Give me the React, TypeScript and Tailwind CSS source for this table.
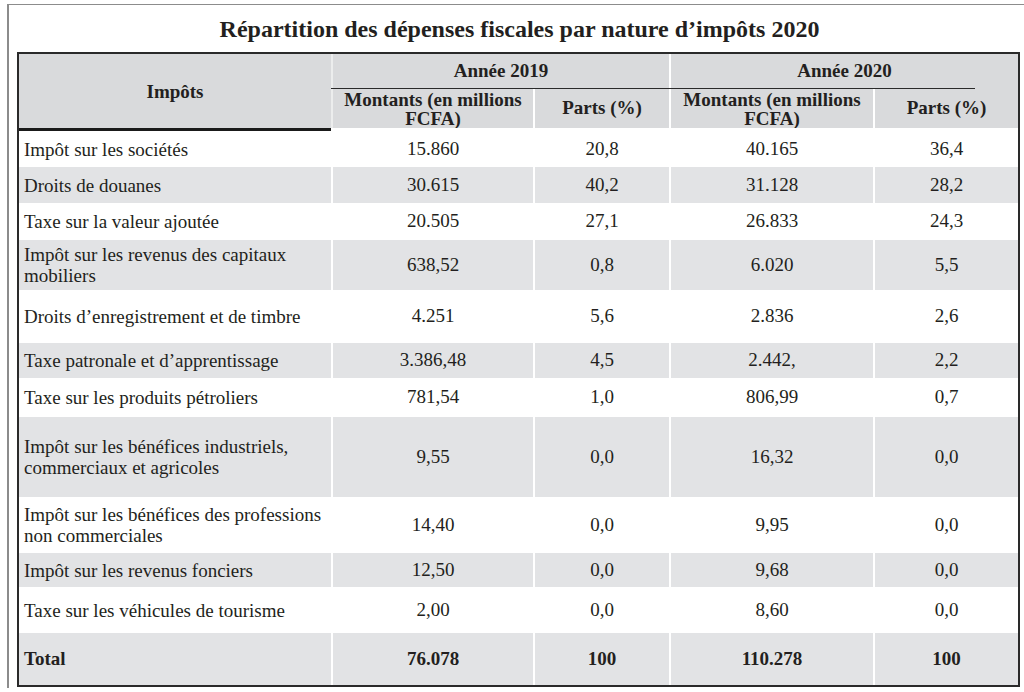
type Row = { label: string; m19: string; p19: string; m20: string; p20: string; h: string };

const rows: Row[] = [
  { label: "Impôt sur les sociétés", m19: "15.860", p19: "20,8", m20: "40.165", p20: "36,4", h: "h-[36px]" },
  { label: "Droits de douanes", m19: "30.615", p19: "40,2", m20: "31.128", p20: "28,2", h: "h-[36px]" },
  { label: "Taxe sur la valeur ajoutée", m19: "20.505", p19: "27,1", m20: "26.833", p20: "24,3", h: "h-[37px]" },
  { label: "Impôt sur les revenus des capitaux mobiliers", m19: "638,52", p19: "0,8", m20: "6.020", p20: "5,5", h: "h-[50px]" },
  { label: "Droits d’enregistrement et de timbre", m19: "4.251", p19: "5,6", m20: "2.836", p20: "2,6", h: "h-[53px]" },
  { label: "Taxe patronale et d’apprentissage", m19: "3.386,48", p19: "4,5", m20: "2.442,", p20: "2,2", h: "h-[35px]" },
  { label: "Taxe sur les produits pétroliers", m19: "781,54", p19: "1,0", m20: "806,99", p20: "0,7", h: "h-[39px]" },
  { label: "Impôt sur les bénéfices industriels, commerciaux et agricoles", m19: "9,55", p19: "0,0", m20: "16,32", p20: "0,0", h: "h-[80px]" },
  { label: "Impôt sur les bénéfices des professions non commerciales", m19: "14,40", p19: "0,0", m20: "9,95", p20: "0,0", h: "h-[56px]" },
  { label: "Impôt sur les revenus fonciers", m19: "12,50", p19: "0,0", m20: "9,68", p20: "0,0", h: "h-[34px]" },
  { label: "Taxe sur les véhicules de tourisme", m19: "2,00", p19: "0,0", m20: "8,60", p20: "0,0", h: "h-[46px]" },
];

const cols = "grid grid-cols-[312px_202px_136px_204px_145px]";

function BodyRow({ row, gray }: { row: Row; gray: boolean }) {
  const bg = gray ? "bg-[#e2e3e5]" : "bg-white";
  const cell = `flex items-center justify-center border-l-2 border-white ${bg}`;
  return (
    <div className={`${cols} ${row.h}`}>
      <div className={`flex items-center pl-[5px] pr-[4px] leading-[21px] ${bg}`}>{row.label}</div>
      <div className={cell}>{row.m19}</div>
      <div className={cell}>{row.p19}</div>
      <div className={cell}>{row.m20}</div>
      <div className={cell}>{row.p20}</div>
    </div>
  );
}

export default function App() {
  return (
    <div className="h-[692px] bg-white pt-[4px] pl-[7px] font-['Liberation_Serif',serif] text-[#231f20]">
      <div className="h-[684px] border-t border-l-2 border-[#8c8c8c] pl-[8px] pr-[4px]">
        <h1 className="flex h-[47px] items-center justify-center pl-[2px] text-[24px] font-bold">
          Répartition des dépenses fiscales par nature d’impôts 2020
        </h1>

        <div className="w-[1003px] border-2 border-[#2a2a2a] text-[19px]">
          {/* header */}
          <div className={`${cols} grid-rows-[34px_1px_39px_3px] font-bold`}>
            <div className="row-span-3 flex items-center justify-center bg-[#d9dadc] pt-[2px]">Impôts</div>
            <div className="col-span-2 flex items-center justify-center border-l-2 border-[#eceded] bg-[#d9dadc]">
              Année 2019
            </div>
            <div className="col-span-2 flex items-center justify-center border-l-2 border-white bg-[#d9dadc]">
              Année 2020
            </div>
            <div className="col-span-4 flex bg-[#d9dadc]">
              <div className="w-[644px] bg-[#2a2a2a]" />
            </div>
            <div className="flex flex-col items-center justify-center border-l-2 border-[#eceded] bg-[#d9dadc] text-center leading-[19px]">
              <span>Montants (en millions</span>
              <span>FCFA)</span>
            </div>
            <div className="flex items-center justify-center border-l-2 border-white bg-[#d9dadc]">Parts (%)</div>
            <div className="flex flex-col items-center justify-center border-l-2 border-white bg-[#d9dadc] text-center leading-[19px]">
              <span>Montants (en millions</span>
              <span>FCFA)</span>
            </div>
            <div className="flex items-center justify-center border-l-2 border-white bg-[#d9dadc]">Parts (%)</div>
            <div className="bg-[#1a1a1a]" />
            <div className="col-span-4 bg-white" />
          </div>

          {rows.map((r, i) => (
            <BodyRow key={r.label} row={r} gray={i % 2 === 1} />
          ))}

          {/* total */}
          <div className={`${cols} h-[52px] bg-[#e2e3e5] font-bold`}>
            <div className="flex items-center pl-[5px]">Total</div>
            <div className="flex items-center justify-center border-l-2 border-white">76.078</div>
            <div className="flex items-center justify-center border-l-2 border-white">100</div>
            <div className="flex items-center justify-center border-l-2 border-white">110.278</div>
            <div className="flex items-center justify-center border-l-2 border-white">100</div>
          </div>
        </div>
      </div>
    </div>
  );
}
